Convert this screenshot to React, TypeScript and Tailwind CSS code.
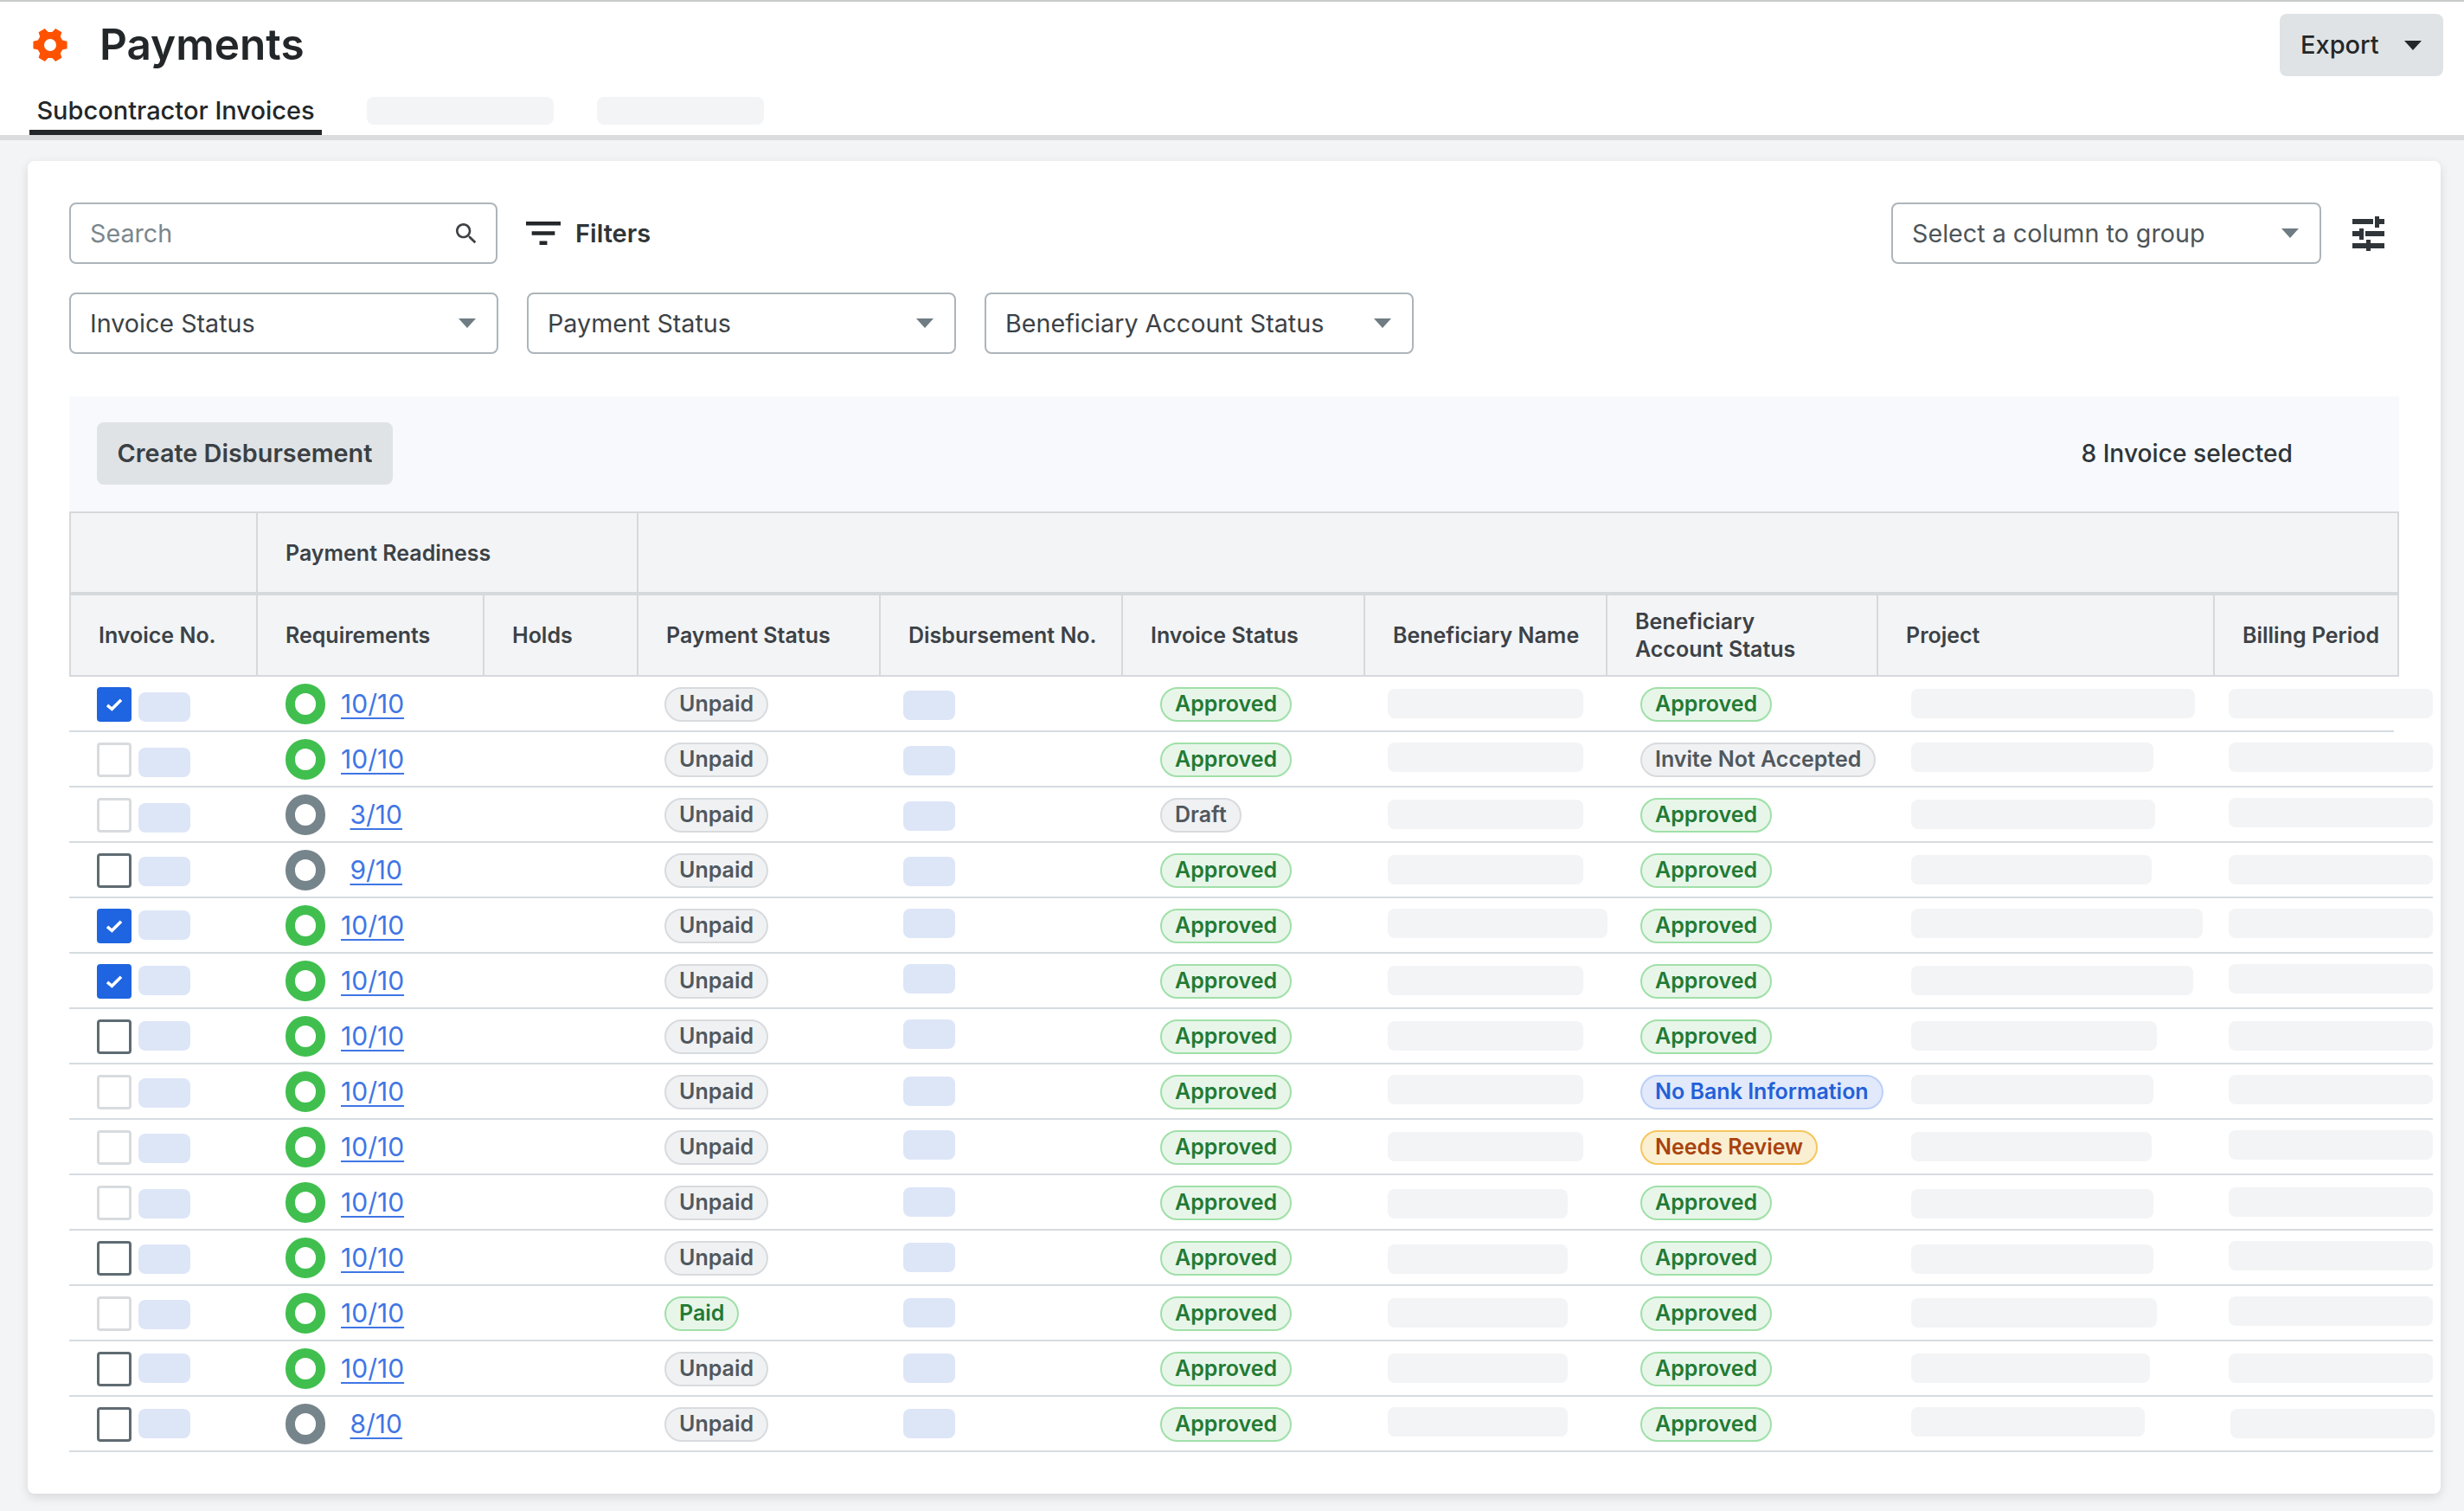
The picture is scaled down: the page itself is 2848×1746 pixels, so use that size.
import React from "react";

type Tone = "gray" | "green" | "blue" | "orange";

const toneClass: Record<Tone, string> = {
  gray: "bg-[#f0f1f3] border-[#d8dbde] text-[#50585d]",
  green: "bg-[#e8f6ea] border-[#a0e0a8] text-[#237a33]",
  blue: "bg-[#e1e9fb] border-[#bcd0f7] text-[#2460d8]",
  orange: "bg-[#fbefd2] border-[#f5c65c] text-[#a8430f]",
};

const gearPoints = (() => {
  const pts: string[] = [];
  const pol = (r: number, deg: number) => {
    const a = (deg * Math.PI) / 180;
    return `${(20 + r * Math.cos(a)).toFixed(2)},${(20 + r * Math.sin(a)).toFixed(2)}`;
  };
  for (let i = 0; i < 6; i++) {
    const c = i * 60;
    pts.push(pol(15.2, c - 21), pol(20, c - 12), pol(20, c + 12), pol(15.2, c + 21));
  }
  return pts.join(" ");
})();

function Gear() {
  return (
    <svg width="40" height="40" viewBox="0 0 40 40" className="shrink-0">
      <polygon points={gearPoints} fill="#ff5200" />
      <circle cx="20" cy="20" r="7" fill="#ffffff" />
    </svg>
  );
}

function Caret({ color = "#6f7c83" }: { color?: string }) {
  return (
    <svg width="20" height="11" viewBox="0 0 20 11" className="shrink-0">
      <polygon points="0,0 20,0 10,11" fill={color} />
    </svg>
  );
}

function Select({ label, width, textClass }: { label: string; width: string; textClass: string }) {
  return (
    <div className={`${width} h-[71px] flex items-center justify-between pl-[22px] pr-[24px] border-2 border-[#adb5ba] rounded-[8px] bg-white text-[28.7px] ${textClass}`}>
      <span>{label}</span>
      <Caret />
    </div>
  );
}

function Badge({ tone, children }: { tone: Tone; children: React.ReactNode }) {
  return (
    <span className={`inline-flex items-center h-[40px] px-[15px] border-2 rounded-full text-[25px] font-semibold whitespace-nowrap ${toneClass[tone]}`}>
      {children}
    </span>
  );
}

function Checkbox({ state }: { state: "on" | "light" | "dark" }) {
  if (state === "on") {
    return (
      <span className="w-[40px] h-[40px] rounded-[4px] bg-[#1f64e0] flex items-center justify-center shrink-0">
        <svg width="20" height="16" viewBox="0 0 22 18">
          <path d="M2 10 L8 15 L20 3" fill="none" stroke="#ffffff" strokeWidth="4" />
        </svg>
      </span>
    );
  }
  return (
    <span className={`w-[40px] h-[40px] rounded-[4px] border-[3px] shrink-0 ${state === "light" ? "border-[#d8dbde]" : "border-[#5f6b72]"}`} />
  );
}

function Skel({ w, top, tint, left = 0 }: { w: number; top: number; tint: "blue" | "gray"; left?: number }) {
  return (
    <div
      className={`h-[34px] rounded-[8px] ${tint === "blue" ? "bg-[#dde6f7]" : "bg-[#f3f4f6]"}`}
      style={{ width: w, marginTop: top, marginLeft: left }}
    />
  );
}

type Row = {
  check: "on" | "light" | "dark";
  inv: number;
  req: string;
  pay: [Tone, string];
  disb: number;
  status: [Tone, string];
  nameW: number;
  nameT: number;
  acct: [Tone, string];
  projW: number;
  projT: number;
  billT: number;
  billL?: number;
};

const ap: [Tone, string] = ["green", "Approved"];
const un: [Tone, string] = ["gray", "Unpaid"];

const rows: Row[] = [
  { check: "on", inv: 18, req: "10/10", pay: un, disb: 16, status: ap, nameW: 226, nameT: 14, acct: ap, projW: 328, projT: 14, billT: 14 },
  { check: "light", inv: 18, req: "10/10", pay: un, disb: 16, status: ap, nameW: 226, nameT: 12, acct: ["gray", "Invite Not Accepted"], projW: 280, projT: 12, billT: 12 },
  { check: "light", inv: 18, req: "3/10", pay: un, disb: 16, status: ["gray", "Draft"], nameW: 226, nameT: 14, acct: ap, projW: 282, projT: 14, billT: 12 },
  { check: "dark", inv: 16, req: "9/10", pay: un, disb: 16, status: ap, nameW: 226, nameT: 14, acct: ap, projW: 278, projT: 14, billT: 14 },
  { check: "on", inv: 14, req: "10/10", pay: un, disb: 12, status: ap, nameW: 254, nameT: 12, acct: ap, projW: 337, projT: 12, billT: 12 },
  { check: "on", inv: 14, req: "10/10", pay: un, disb: 12, status: ap, nameW: 226, nameT: 14, acct: ap, projW: 326, projT: 14, billT: 12 },
  { check: "dark", inv: 14, req: "10/10", pay: un, disb: 12, status: ap, nameW: 226, nameT: 14, acct: ap, projW: 284, projT: 14, billT: 14 },
  { check: "light", inv: 16, req: "10/10", pay: un, disb: 14, status: ap, nameW: 226, nameT: 12, acct: ["blue", "No Bank Information"], projW: 280, projT: 12, billT: 12 },
  { check: "light", inv: 16, req: "10/10", pay: un, disb: 12, status: ap, nameW: 226, nameT: 14, acct: ["orange", "Needs Review"], projW: 278, projT: 14, billT: 12 },
  { check: "light", inv: 16, req: "10/10", pay: un, disb: 14, status: ap, nameW: 208, nameT: 16, acct: ap, projW: 280, projT: 16, billT: 14 },
  { check: "dark", inv: 16, req: "10/10", pay: un, disb: 14, status: ap, nameW: 208, nameT: 16, acct: ap, projW: 280, projT: 16, billT: 12 },
  { check: "light", inv: 16, req: "10/10", pay: ["green", "Paid"], disb: 14, status: ap, nameW: 208, nameT: 14, acct: ap, projW: 284, projT: 14, billT: 12 },
  { check: "dark", inv: 14, req: "10/10", pay: un, disb: 14, status: ap, nameW: 208, nameT: 14, acct: ap, projW: 276, projT: 14, billT: 14 },
  { check: "dark", inv: 14, req: "8/10", pay: un, disb: 14, status: ap, nameW: 208, nameT: 12, acct: ap, projW: 270, projT: 12, billT: 14, billL: 2 },
];

const gridCols = "grid-cols-[218px_262px_178px_280px_280px_280px_280px_313px_389px_213px]";
const bodyCols = "grid-cols-[218px_262px_178px_280px_280px_280px_280px_313px_389px_252px]";

const headCell = "flex items-center pl-[32px] border-r-2 border-[#d6d9dc] text-[25px] leading-[32px] font-semibold text-[#3c4246] whitespace-nowrap";

export default function App() {
  return (
    <div className="w-[2848px] h-[1746px] overflow-hidden bg-[#f3f4f6] [font-family:Inter,sans-serif] text-[#232729]">
      <header className="h-[162px] bg-white border-t-2 border-t-[#c9cbcc] border-b-[6px] border-b-[#dadcde] flex flex-col">
        <div className="mt-[14px] h-[72px] flex items-center justify-between pl-[38px] pr-[24px]">
          <div className="flex items-center gap-[37px]">
            <Gear />
            <h1 className="text-[49.5px] font-semibold leading-none">Payments</h1>
          </div>
          <button className="w-[189px] h-[72px] rounded-[8px] bg-[#e0e3e5] flex items-center justify-between pl-[24px] pr-[25px] text-[29px] font-medium">
            <span>Export</span>
            <Caret color="#232729" />
          </button>
        </div>
        <div className="flex-1 flex pl-[34px]">
          <div className="w-[338px] h-full border-b-[6px] border-[#232729] flex items-end justify-center pb-[2px]">
            <span className="text-[29px] leading-[40px] font-medium whitespace-nowrap">Subcontractor Invoices</span>
          </div>
          <div className="ml-[52px] mt-[24px] w-[216px] h-[32px] rounded-[8px] bg-[#f3f4f6]" />
          <div className="ml-[50px] mt-[24px] w-[193px] h-[32px] rounded-[8px] bg-[#f3f4f6]" />
        </div>
      </header>

      <main className="pl-[32px] pt-[24px]">
        <section className="w-[2789px] h-[1540px] bg-white rounded-[8px] shadow-[0_4px_12px_rgba(0,0,0,0.12)] pl-[48px] pt-[48px]">
          <div className="flex items-center pr-[65px]">
            <div className="w-[495px] h-[71px] flex items-center justify-between pl-[22px] pr-[22px] border-2 border-[#adb5ba] rounded-[8px] text-[28.7px] text-[#7b868c]">
              <span>Search</span>
              <svg width="24" height="24" viewBox="3 3 18 18" fill="#3c4246">
                <path d="M15.5 14h-.79l-.28-.27C15.41 12.59 16 11.11 16 9.5 16 5.91 13.09 3 9.5 3S3 5.91 3 9.5 5.91 16 9.5 16c1.61 0 3.09-.59 4.23-1.57l.27.28v.79l5 4.99L20.49 19l-4.99-5zm-6 0C7.01 14 5 11.99 5 9.5S7.01 5 9.5 5 14 7.01 14 9.5 11.99 14 9.5 14z" />
              </svg>
            </div>
            <svg width="40" height="27" viewBox="3 6 18 12" preserveAspectRatio="none" fill="#232729" className="ml-[33px]">
              <path d="M10 18h4v-2h-4v2zM3 6v2h18V6H3zm3 7h12v-2H6v2z" />
            </svg>
            <span className="ml-[17px] text-[29px] font-semibold text-[#2f3538]">Filters</span>
            <div className="ml-auto flex items-center gap-[36px]">
              <Select label="Select a column to group" width="w-[497px]" textClass="text-[#4d5559]" />
              <svg width="37" height="40" viewBox="0 0 37 40" fill="#2f3538">
                <rect x="0" y="3" width="24" height="6" />
                <rect x="26" y="0" width="5" height="13" />
                <rect x="31" y="3" width="6" height="6" />
                <rect x="0" y="17" width="8" height="6" />
                <rect x="8" y="14" width="5" height="13" />
                <rect x="15" y="17" width="22" height="6" />
                <rect x="0" y="31" width="16" height="6" />
                <rect x="16" y="27" width="5" height="13" />
                <rect x="21" y="31" width="16" height="6" />
              </svg>
            </div>
          </div>

          <div className="mt-[33px] flex gap-[33px]">
            <Select label="Invoice Status" width="w-[496px]" textClass="text-[#3c4246]" />
            <Select label="Payment Status" width="w-[496px]" textClass="text-[#3c4246]" />
            <Select label="Beneficiary Account Status" width="w-[496px]" textClass="text-[#3c4246]" />
          </div>

          <div className="mt-[49px] w-[2693px] h-[133px] bg-[#f7f9fc] flex items-start justify-between pl-[32px] pr-[123px] pt-[30px]">
            <button className="w-[342px] h-[72px] rounded-[8px] bg-[#e0e3e5] text-[28.8px] font-semibold text-[#3a4044] whitespace-nowrap">
              Create Disbursement
            </button>
            <span className="mt-[16px] text-[28.2px] leading-[40px] font-medium text-[#2f3538] whitespace-nowrap">8 Invoice selected</span>
          </div>

          <div className="w-[2732px]">
            <div className="w-[2693px] bg-[#f3f4f6] border-2 border-b-0 border-[#d6d9dc]">
              <div className={`grid ${gridCols} -ml-[2px] -mr-[2px] h-[91px]`}>
                <div className={headCell} />
                <div className={`${headCell} col-span-2`}>Payment Readiness</div>
                <div className="col-span-7" />
              </div>
            </div>
            <div className="w-[2693px] h-[4px] bg-[#d6d9dc]" />
            <div className={`w-[2693px] grid ${gridCols} h-[94px] bg-[#f3f4f6] border-b-2 border-[#d6d9dc]`}>
              <div className={`${headCell} border-l-2 pl-[28px]`}>Invoice No.</div>
              <div className={headCell}>Requirements</div>
              <div className={headCell}>Holds</div>
              <div className={headCell}>Payment Status</div>
              <div className={headCell}>Disbursement No.</div>
              <div className={headCell}>Invoice Status</div>
              <div className={headCell}>Beneficiary Name</div>
              <div className={headCell}>
                <span>Beneficiary<br />Account Status</span>
              </div>
              <div className={headCell}>Project</div>
              <div className={headCell}>Billing Period</div>
            </div>

            {rows.map((r, i) => (
              <div key={i}>
                <div className={`grid ${bodyCols} h-[62px]`}>
                  <div className="pl-[32px] pt-[12px] flex items-start gap-[8px]">
                    <Checkbox state={r.check} />
                    <Skel w={60} top={r.inv - 12} tint="blue" />
                  </div>
                  <div className="pl-[32px] flex items-center">
                    <span className={`w-[46px] h-[47px] rounded-full border-[11px] shrink-0 ${r.req === "10/10" ? "border-[#40bf4e]" : "border-[#76848b]"}`} />
                    <span className="ml-[18px] w-[71px] text-right">
                      <a className="text-[30px] leading-[40px] text-[#3f76e4] underline decoration-2 underline-offset-[5px]">{r.req}</a>
                    </span>
                  </div>
                  <div />
                  <div className="pl-[30px] pt-[12px]"><Badge tone={r.pay[0]}>{r.pay[1]}</Badge></div>
                  <div className="pl-[26px]"><Skel w={60} top={r.disb} tint="blue" /></div>
                  <div className="pl-[43px] pt-[12px]"><Badge tone={r.status[0]}>{r.status[1]}</Badge></div>
                  <div className="pl-[26px]"><Skel w={r.nameW} top={r.nameT} tint="gray" /></div>
                  <div className="pl-[38px] pt-[12px]"><Badge tone={r.acct[0]}>{r.acct[1]}</Badge></div>
                  <div className="pl-[38px]"><Skel w={r.projW} top={r.projT} tint="gray" /></div>
                  <div className="pl-[16px]"><Skel w={236} top={r.billT} tint="gray" left={r.billL ?? 0} /></div>
                </div>
                <div className={`h-[2px] bg-[#d6dce0] ${i === 0 ? "w-[2687px]" : "w-full"}`} />
              </div>
            ))}
          </div>
        </section>
      </main>
    </div>
  );
}
